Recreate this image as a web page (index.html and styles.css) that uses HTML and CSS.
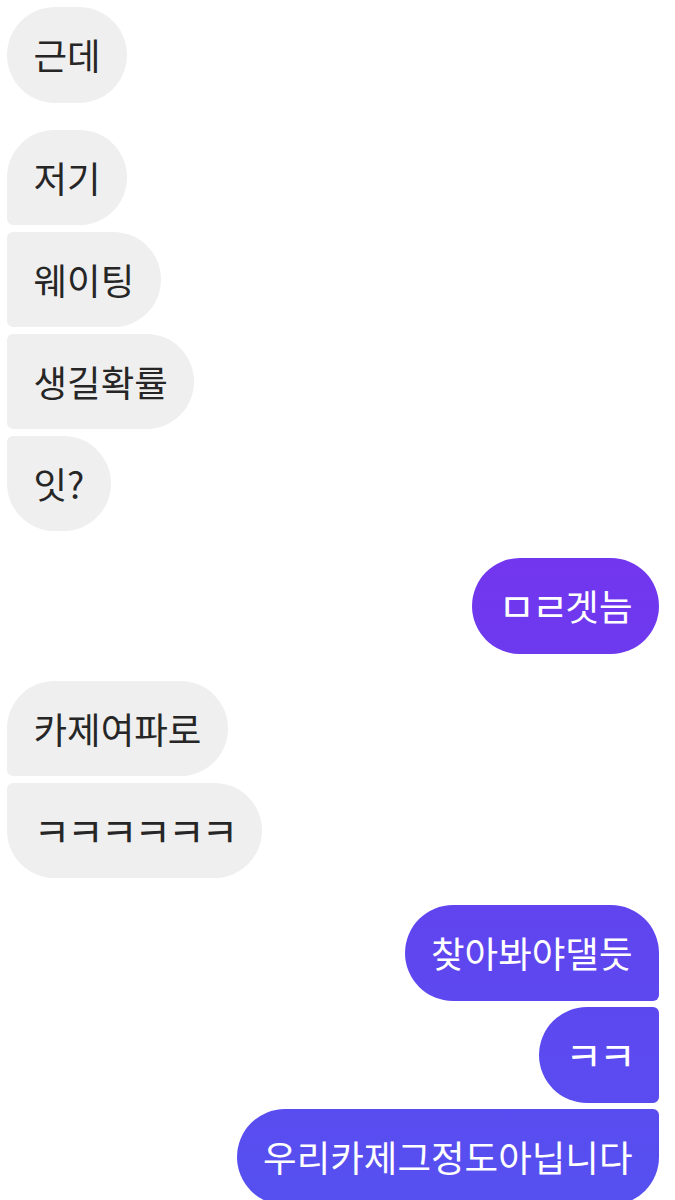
FILE: index.html
```html
<!DOCTYPE html>
<html lang="ko">
<head>
<meta charset="utf-8">
<link rel="stylesheet" href="styles.css">
</head>
<body>
<div class="chat">
  <div class="group in">
    <div class="bubble">근데</div>
  </div>
  <div class="group in">
    <div class="bubble">저기</div>
    <div class="bubble">웨이팅</div>
    <div class="bubble">생길확률</div>
    <div class="bubble">잇?</div>
  </div>
  <div class="group out">
    <div class="bubble"><span class="jamo">ㅁㄹ</span>겟늠</div>
  </div>
  <div class="group in">
    <div class="bubble">카제여파로</div>
    <div class="bubble"><span class="jamo">ㅋㅋㅋㅋㅋㅋ</span></div>
  </div>
  <div class="group out">
    <div class="bubble">찾아봐야댈듯</div>
    <div class="bubble"><span class="jamo">ㅋㅋ</span></div>
    <div class="bubble">우리카제그정도아닙니다</div>
  </div>
</div>
</body>
</html>
```
FILE: styles.css
```css
html, body {
  margin: 0;
  padding: 0;
  background: #ffffff;
}
body {
  width: 675px;
  height: 1200px;
  overflow: hidden;
  font-family: "Noto Sans CJK KR", "Noto Sans", sans-serif;
}
.chat {
  display: flex;
  flex-direction: column;
  gap: 27px;
  padding: 7px 16px 0 7px;
}
.group {
  display: flex;
  flex-direction: column;
  gap: 6.5px;
}
.group.in { align-items: flex-start; }
.group.out { align-items: flex-end; }
.bubble {
  box-sizing: border-box;
  height: 95.5px;
  padding: 0 26.5px;
  font-size: 36.5px;
  line-height: 95.5px;
  white-space: nowrap;
  border-radius: 48px;
}
.jamo {
  font-size: 40px;
  letter-spacing: -3.2px;
  line-height: 1;
  vertical-align: -1px;
}
.in .bubble {
  background: #efefef;
  color: #262626;
}
.out .bubble {
  color: #ffffff;
  background: linear-gradient(180deg, #7d30ee 0px, #7236ee 560px, #6144ef 900px, #5650f0 1200px) fixed;
}
.in .bubble:not(:last-child) { border-bottom-left-radius: 6px; }
.in .bubble:not(:first-child) { border-top-left-radius: 6px; }
.out .bubble:not(:last-child) { border-bottom-right-radius: 6px; }
.out .bubble:not(:first-child) { border-top-right-radius: 6px; }
```
